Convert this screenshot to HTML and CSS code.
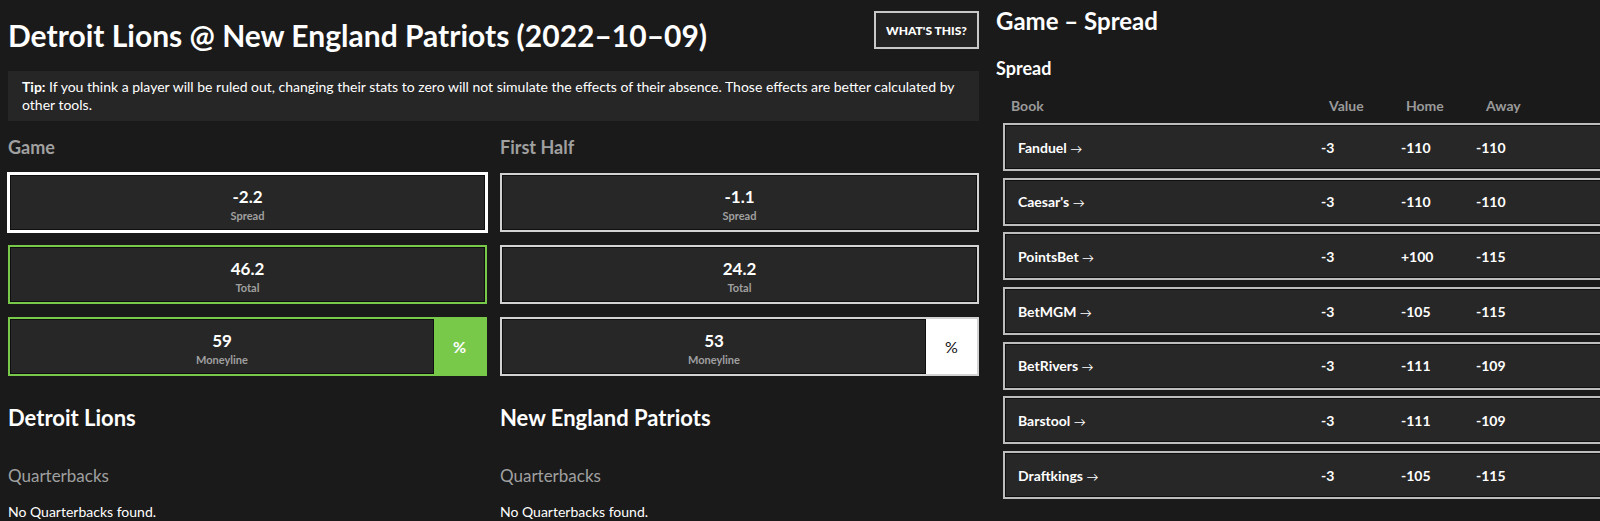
FILE: index.html
```html
<!DOCTYPE html>
<html lang="en">
<head>
    <meta charset="utf-8">
    <title>Detroit Lions @ New England Patriots (2022-10-09)</title>
    <link rel="stylesheet" href="styles.css">
</head>
<body>
    <div class="page">
        <main class="game">
            <header class="game-header">
                <h1 class="game-title">Detroit Lions @ New England Patriots (2022–10–09)</h1>
                <button class="help-btn">What's this?</button>
            </header>

            <p class="tip"><strong>Tip:</strong> If you think a player will be ruled out, changing their stats to zero will not simulate the effects of their absence. Those effects are better calculated by other tools.</p>

            <section class="lines">
                <div class="line-col">
                    <h3 class="col-title">Game</h3>
                    <div class="stat stat-selected">
                        <div class="stat-main">
                            <span class="stat-value">-2.2</span>
                            <span class="stat-label">Spread</span>
                        </div>
                    </div>
                    <div class="stat stat-green">
                        <div class="stat-main">
                            <span class="stat-value">46.2</span>
                            <span class="stat-label">Total</span>
                        </div>
                    </div>
                    <div class="stat stat-green">
                        <div class="stat-main">
                            <span class="stat-value">59</span>
                            <span class="stat-label">Moneyline</span>
                        </div>
                        <div class="stat-unit unit-green">%</div>
                    </div>
                </div>

                <div class="line-col">
                    <h3 class="col-title">First Half</h3>
                    <div class="stat">
                        <div class="stat-main">
                            <span class="stat-value">-1.1</span>
                            <span class="stat-label">Spread</span>
                        </div>
                    </div>
                    <div class="stat">
                        <div class="stat-main">
                            <span class="stat-value">24.2</span>
                            <span class="stat-label">Total</span>
                        </div>
                    </div>
                    <div class="stat">
                        <div class="stat-main">
                            <span class="stat-value">53</span>
                            <span class="stat-label">Moneyline</span>
                        </div>
                        <div class="stat-unit unit-white">%</div>
                    </div>
                </div>
            </section>

            <section class="teams">
                <div class="team">
                    <h2 class="team-name">Detroit Lions</h2>
                    <h4 class="team-group">Quarterbacks</h4>
                    <p class="team-empty">No Quarterbacks found.</p>
                </div>
                <div class="team">
                    <h2 class="team-name">New England Patriots</h2>
                    <h4 class="team-group">Quarterbacks</h4>
                    <p class="team-empty">No Quarterbacks found.</p>
                </div>
            </section>
        </main>

        <aside class="odds">
            <h2 class="odds-title">Game – Spread</h2>
            <h3 class="odds-sub">Spread</h3>

            <div class="odds-head">
                <span>Book</span>
                <span>Value</span>
                <span>Home</span>
                <span>Away</span>
            </div>

            <a class="odds-row" href="#"><span>Fanduel <i>→</i></span><span>-3</span><span>-110</span><span>-110</span></a>
            <a class="odds-row" href="#"><span>Caesar's <i>→</i></span><span>-3</span><span>-110</span><span>-110</span></a>
            <a class="odds-row" href="#"><span>PointsBet <i>→</i></span><span>-3</span><span>+100</span><span>-115</span></a>
            <a class="odds-row" href="#"><span>BetMGM <i>→</i></span><span>-3</span><span>-105</span><span>-115</span></a>
            <a class="odds-row" href="#"><span>BetRivers <i>→</i></span><span>-3</span><span>-111</span><span>-109</span></a>
            <a class="odds-row" href="#"><span>Barstool <i>→</i></span><span>-3</span><span>-111</span><span>-109</span></a>
            <a class="odds-row" href="#"><span>Draftkings <i>→</i></span><span>-3</span><span>-105</span><span>-115</span></a>

            <h3 class="odds-sub odds-next">Alternate Spreads</h3>
        </aside>
    </div>
</body>
</html>
```

FILE: styles.css
```css
:root {
    --bg: #1a1a1a;
    --panel: #272727;
    --line: #0f0f0f;
    --green: #78c84a;
    --muted: #a0a0a0;
}

* {
    margin: 0;
    padding: 0;
    box-sizing: border-box;
}

body {
    font-family: Lato, 'Open Sans', sans-serif;
    background: var(--bg);
    color: #fff;
    overflow: hidden;
}

.page {
    display: flex;
    gap: 17px;
    padding: 0 8px;
    width: 1800px;
}

/* left side */

.game {
    width: 971px;
    flex-shrink: 0;
}

.game-header {
    display: flex;
    justify-content: space-between;
    align-items: flex-start;
    padding-top: 11px;
}

.game-title {
    font-size: 30px;
    line-height: 38px;
    font-weight: 700;
    margin-top: 5px;
}

.help-btn {
    width: 105px;
    height: 38px;
    background: #222;
    border: 2px solid #c8c8c8;
    color: #fff;
    font-family: inherit;
    font-size: 12px;
    font-weight: 900;
    text-transform: uppercase;
}

.tip {
    margin-top: 17px;
    background: #262626;
    padding: 7px 14px;
    font-size: 14px;
    line-height: 18px;
}

.lines {
    display: grid;
    grid-template-columns: 1fr 1fr;
    gap: 13px;
    margin-top: 15px;
}

.col-title {
    font-size: 18px;
    line-height: 22px;
    color: var(--muted);
    margin-bottom: 15px;
}

.stat {
    display: flex;
    height: 59px;
    border: 2px solid #d2d2d2;
    margin-bottom: 13px;
}

.stat-green {
    border-color: var(--green);
}

.stat-selected {
    border-color: #fff;
    box-shadow: 0 0 0 1px #fff;
}

.stat-main {
    flex: 1;
    display: flex;
    flex-direction: column;
    align-items: center;
    justify-content: center;
    gap: 2px;
    padding-top: 5px;
    background: var(--panel);
    box-shadow: inset 0 0 0 1px var(--line);
}

.stat-value {
    font-size: 17px;
    line-height: 20px;
    font-weight: 700;
}

.stat-label {
    font-size: 11px;
    line-height: 14px;
    font-weight: 700;
    color: var(--muted);
}

.stat-unit {
    width: 51px;
    display: grid;
    place-items: center;
    font-size: 16px;
}

.unit-green {
    background: var(--green);
    font-weight: 700;
}

.unit-white {
    background: #fff;
    color: #111;
}

.teams {
    display: grid;
    grid-template-columns: 1fr 1fr;
    gap: 13px;
    margin-top: 15px;
}

.team-name {
    font-size: 22px;
    line-height: 28px;
}

.team-group {
    font-size: 17px;
    line-height: 22px;
    font-weight: 400;
    color: var(--muted);
    margin-top: 33px;
}

.team-empty {
    font-size: 14px;
    line-height: 18px;
    margin-top: 16px;
}

/* right side: sportsbook odds */

.odds {
    width: 700px;
    flex-shrink: 0;
}

.odds-title {
    font-size: 24px;
    line-height: 30px;
    margin-top: 6px;
}

.odds-sub {
    font-size: 18px;
    line-height: 22px;
    margin-top: 21px;
}

.odds-head {
    display: grid;
    grid-template-columns: 318px 77px 80px 1fr;
    margin: 17px 0 7px 15px;
    font-size: 14px;
    line-height: 20px;
    font-weight: 700;
    color: #9a9a9a;
}

.odds-row {
    display: grid;
    grid-template-columns: 303px 80px 75px 1fr;
    align-items: center;
    height: 48px;
    margin: 0 0 6.7px 7px;
    padding-left: 13px;
    background: var(--panel);
    border: 2px solid #bdbdbd;
    box-shadow: inset 0 0 0 1px var(--line);
    color: #fff;
    text-decoration: none;
    font-size: 14px;
    font-weight: 700;
}

.odds-row i {
    font-style: normal;
    font-weight: 400;
    font-size: 12px;
}

.odds-next {
    margin-top: 22px;
}
```
